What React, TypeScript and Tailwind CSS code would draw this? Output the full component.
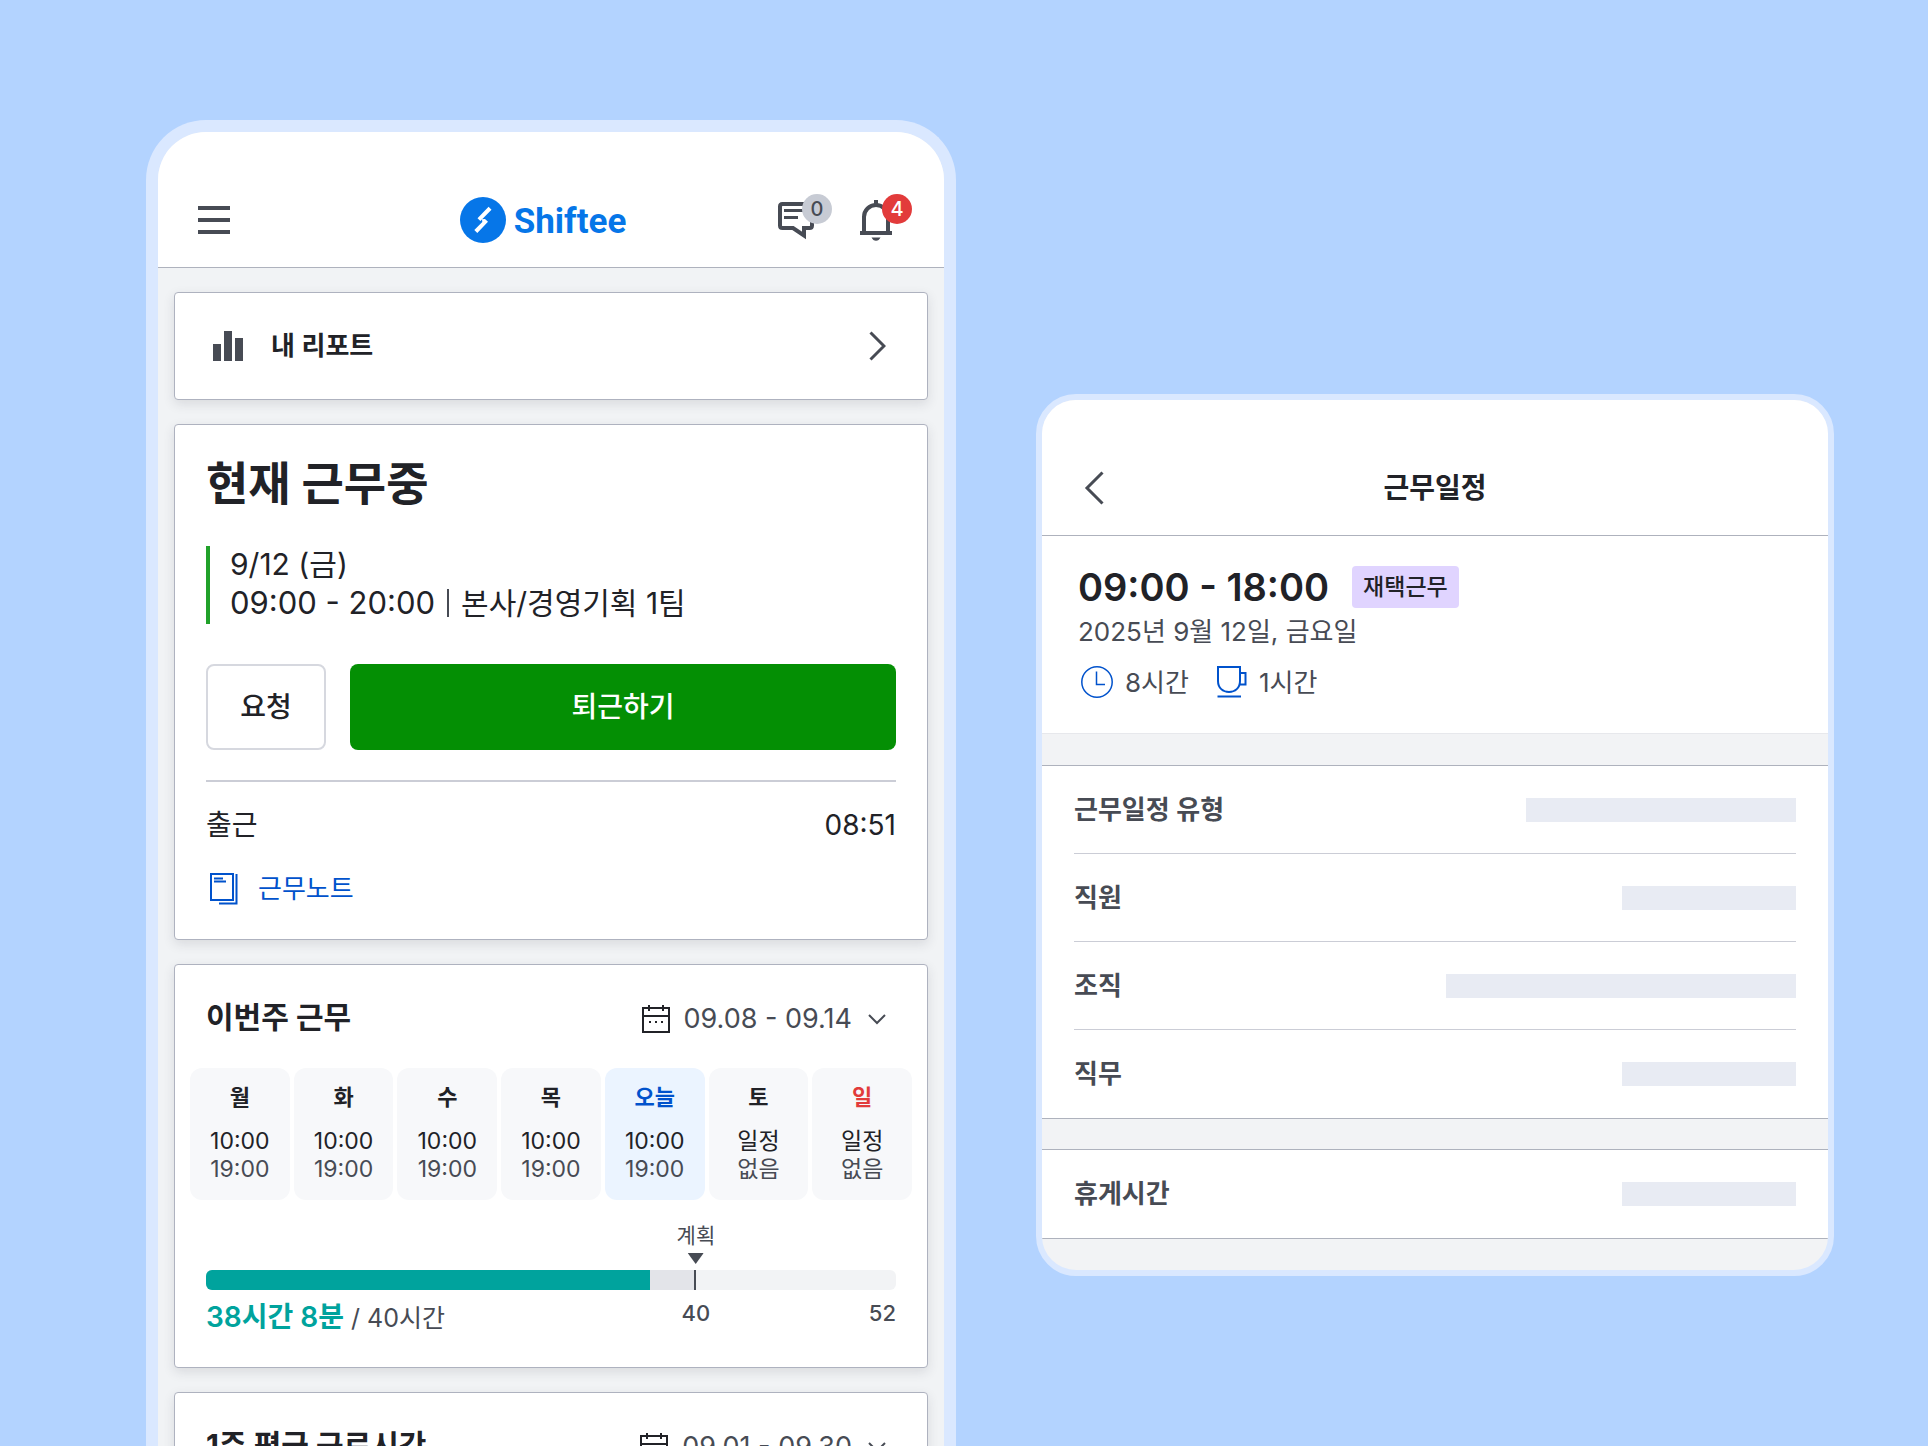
import React from "react";

const FONT = "font-['Inter','Noto_Sans_CJK_KR',sans-serif]";

interface DayPlan {
  label: string;
  from: string;
  to: string;
  tone?: "today" | "holiday";
}

const WEEK: DayPlan[] = [
  { label: "월", from: "10:00", to: "19:00" },
  { label: "화", from: "10:00", to: "19:00" },
  { label: "수", from: "10:00", to: "19:00" },
  { label: "목", from: "10:00", to: "19:00" },
  { label: "오늘", from: "10:00", to: "19:00", tone: "today" },
  { label: "토", from: "일정", to: "없음" },
  { label: "일", from: "일정", to: "없음", tone: "holiday" },
];

const DETAIL_ROWS = [
  { label: "근무일정 유형", bar: "w-[270px]" },
  { label: "직원", bar: "w-[174px]" },
  { label: "조직", bar: "w-[350px]" },
  { label: "직무", bar: "w-[174px]" },
];

// Positions on the weekly bar, in percent of its width.
const WORKED_PCT = 64.4;
const PLANNED_PCT = 71;

export default function App() {
  return (
    <main
      className={`grid h-screen grid-cols-[810fr_798fr] items-start gap-20 overflow-hidden bg-[#b3d3ff] pl-[146px] pr-[94px] text-[#212227] ${FONT}`}
    >
      <HomeScreen />
      <ScheduleScreen />
    </main>
  );
}

function HomeScreen() {
  return (
    <section className="mt-[120px] min-w-0 overflow-hidden rounded-t-[60px] border-x-12 border-t-12 border-[#dae8ff] bg-[#f1f3f5]">
      <header className="grid h-[136px] grid-cols-[1fr_auto_1fr] items-center border-b border-[#aeb2bd] bg-white px-8 pt-[41px]">
        <button type="button" aria-label="메뉴" className="ml-2 justify-self-start">
          <MenuIcon />
        </button>
        <a href="#home" className="mr-4 flex items-center gap-2">
          <LogoMark />
          <span className="pt-[3px] font-['Roboto',sans-serif] text-[35px] leading-10 font-bold text-[#0676e8]">
            Shiftee
          </span>
        </a>
        <div className="mr-5 flex items-center gap-[46px] justify-self-end">
          <button type="button" aria-label="메시지" className="relative">
            <MessageIcon />
            <CountBadge count={0} className="left-6 bg-[#c7cbd4] text-[#474b54]" />
          </button>
          <button type="button" aria-label="알림" className="relative">
            <BellIcon />
            <CountBadge count={4} className="left-[22px] bg-[#e23b3b] text-white" />
          </button>
        </div>
      </header>

      <div className="flex flex-col gap-6 px-4 py-6">
        <Card>
          <a href="#report" className="flex h-[106px] items-center pr-[41px] pl-[38px]">
            <ChartIcon />
            <span className="ml-7 text-[26px] leading-9 font-semibold">내 리포트</span>
            <ChevronRight className="ml-auto" />
          </a>
        </Card>

        <Card>
          <CurrentShift />
        </Card>

        <Card>
          <PeriodHeader title="이번주 근무" range="09.08 - 09.14" />
          <div className="mt-[29px] grid grid-cols-7 gap-1 px-[15px]">
            {WEEK.map((d) => (
              <DayTile key={d.label} day={d} />
            ))}
          </div>
          <WeekProgress />
        </Card>

        <Card>
          <PeriodHeader title="1주 평균 근로시간" range="09.01 - 09.30" />
        </Card>
      </div>
    </section>
  );
}

function Card({ children }: { children: React.ReactNode }) {
  return (
    <div className="rounded-[4px] border border-[#aeb2bf] bg-white shadow-[0_4px_12px_rgba(40,45,60,0.12)]">
      {children}
    </div>
  );
}

function CountBadge({ count, className }: { count: number; className: string }) {
  return (
    <span
      className={`absolute -top-[6px] flex size-[30px] items-center justify-center rounded-full text-xl leading-none font-medium ${className}`}
    >
      {count}
    </span>
  );
}

function CurrentShift() {
  return (
    <div className="px-[31px] pt-7 pb-[30px]">
      <h1 className="text-[46px] leading-[60px] font-bold">현재 근무중</h1>
      <div className="mt-[33px] border-l-4 border-[#21a12a] pl-5 text-[30px]">
        <p className="leading-9">9/12 (금)</p>
        <p className="flex items-center leading-[42px]">
          <time className="text-[31px]">09:00 - 20:00</time>
          <span className="mx-3 h-7 w-[2px] bg-[#474b54]" />
          본사/경영기획 1팀
        </p>
      </div>
      <div className="mt-10 flex h-[86px] gap-6 text-[28px]">
        <button
          type="button"
          className="w-[120px] rounded-[8px] border-2 border-[#d6d8df] font-medium"
        >
          요청
        </button>
        <button
          type="button"
          className="flex-1 rounded-[8px] bg-[#048f04] font-medium text-white"
        >
          퇴근하기
        </button>
      </div>
      <dl className="mt-[30px] flex items-center justify-between border-t-2 border-[#cbcdd6] pt-[23px] text-[28px] leading-10">
        <dt>출근</dt>
        <dd>08:51</dd>
      </dl>
      <a
        href="#note"
        className="mt-6 ml-1 flex items-center gap-5 text-[26px] leading-10 text-[#0052cc]"
      >
        <NoteIcon />
        근무노트
      </a>
    </div>
  );
}

function PeriodHeader({ title, range }: { title: string; range: string }) {
  return (
    <div className="flex h-[74px] items-end justify-between pr-[41px] pl-[31px]">
      <h2 className="text-[30px] leading-[44px] font-bold">{title}</h2>
      <button type="button" className="flex items-center text-[#474b54]">
        <CalendarIcon />
        <span className="mr-4 ml-[14px] text-[27px] leading-[40px]">{range}</span>
        <ChevronDown />
      </button>
    </div>
  );
}

function DayTile({ day }: { day: DayPlan }) {
  const bg = day.tone === "today" ? "bg-[#ebf4ff]" : "bg-[#f7f8fa]";
  const fg =
    day.tone === "today"
      ? "text-[#0052cc]"
      : day.tone === "holiday"
        ? "text-[#e23b3b]"
        : "text-[#212227]";
  return (
    <div className={`flex h-[132px] flex-col items-center rounded-xl pt-[11px] text-[23px] ${bg}`}>
      <span className={`text-[22px] leading-9 font-semibold ${fg}`}>{day.label}</span>
      <span className="mt-3 leading-7">{day.from}</span>
      <span className="leading-7 text-[#474b54]">{day.to}</span>
    </div>
  );
}

function WeekProgress() {
  return (
    <div className="px-[31px] pt-5 pb-[29px] text-[#474b54]">
      <div className="relative h-[50px]">
        <div
          className="absolute top-0 flex -translate-x-1/2 flex-col items-center"
          style={{ left: `${PLANNED_PCT}%` }}
        >
          <span className="text-[21px] leading-8 whitespace-nowrap">계획</span>
          <svg width="16" height="11" viewBox="0 0 16 11" fill="currentColor" className="mt-[1px]">
            <path d="M0 0h16L8 11z" />
          </svg>
        </div>
      </div>
      <div className="relative h-5 overflow-hidden rounded-[6px] bg-[#f2f3f5]">
        <div
          className="absolute inset-y-0 left-0 border-r-2 border-[#474b54] bg-[#e3e4e9]"
          style={{ width: `${PLANNED_PCT}%` }}
        />
        <div
          className="absolute inset-y-0 left-0 bg-[#00a39d]"
          style={{ width: `${WORKED_PCT}%` }}
        />
      </div>
      <div className="relative flex items-start justify-between pt-[7px]">
        <p className="text-[25px] leading-10">
          <strong className="text-[28px] font-semibold text-[#00a39d]">38시간 8분</strong> / 40시간
        </p>
        <span
          className="absolute top-[7px] -translate-x-1/2 text-[22px] leading-8 font-medium"
          style={{ left: `${PLANNED_PCT}%` }}
        >
          40
        </span>
        <span className="text-[22px] leading-8 font-medium">52</span>
      </div>
    </div>
  );
}

function ScheduleScreen() {
  return (
    <section className="mt-[394px] min-w-0 overflow-hidden rounded-[40px] border-6 border-[#dae8ff] bg-[#f2f3f5]">
      <header className="grid h-[136px] grid-cols-[1fr_auto_1fr] items-center border-b border-[#aeb2bd] bg-white px-8 pt-[41px]">
        <button type="button" aria-label="뒤로" className="ml-[10px] justify-self-start">
          <ChevronLeft />
        </button>
        <h2 className="text-[28px] leading-10 font-semibold">근무일정</h2>
      </header>

      <div className="border-b border-[#e7e8ec] bg-white px-9 pt-[30px] pb-[31px]">
        <div className="flex items-center gap-[23px]">
          <time className="text-[38px] leading-[42px] font-semibold">09:00 - 18:00</time>
          <span className="flex h-[42px] items-center rounded-[4px] bg-[#e0d4ff] px-[11px] text-[23px] font-medium">
            재택근무
          </span>
        </div>
        <p className="mt-[6px] text-[26px] leading-9 text-[#474b54]">2025년 9월 12일, 금요일</p>
        <div className="mt-3 ml-[3px] flex h-10 items-center text-[26px] text-[#474b54]">
          <ClockIcon />
          <span className="mr-7 ml-3">8시간</span>
          <CupIcon />
          <span className="ml-3">1시간</span>
        </div>
      </div>

      <dl className="mt-[31px] border-y border-[#aeb2bd] bg-white px-8">
        {DETAIL_ROWS.map((r) => (
          <DetailRow key={r.label} {...r} />
        ))}
      </dl>
      <dl className="mt-[30px] mb-[31px] border-y border-[#aeb2bd] bg-white px-8">
        <DetailRow label="휴게시간" bar="w-[174px]" />
      </dl>
    </section>
  );
}

function DetailRow({ label, bar }: { label: string; bar: string }) {
  return (
    <div className="flex h-[88px] items-center justify-between border-b border-[#cbcdd6] last:border-b-0">
      <dt className="text-[26px] leading-9 font-semibold text-[#474b54]">{label}</dt>
      <dd className={`h-6 bg-[#e8ebf3] ${bar}`} />
    </div>
  );
}

/* ---------- icons ---------- */

function MenuIcon() {
  return (
    <svg width="32" height="28" viewBox="0 0 32 28" fill="#474b54">
      <path d="M0 0h32v4H0zM0 12h32v4H0zM0 24h32v4H0z" />
    </svg>
  );
}

function LogoMark() {
  return (
    <svg width="46" height="46" viewBox="0 0 46 46">
      <circle cx="23" cy="23" r="23" fill="#0676e8" />
      <path
        d="M28.600 9.800l2.900 3L20.400 24l-2.900-2.700zM22 22.200l3-.3 3 2.900-10.700 11.200-3-3 8-8z"
        fill="#fff"
      />
    </svg>
  );
}

function MessageIcon() {
  return (
    <svg width="36" height="41" viewBox="0 -2 36 41" fill="none" stroke="#474b54" strokeWidth="4">
      <path d="M33.500 2H4.500Q2 2 2 4.500V23.500Q2 26 4.500 26H15l11 7.500V26h5.500Q34 26 34 23.500V20" />
      <path d="M6 8.500h22M6 15.500h14" strokeWidth="3" />
    </svg>
  );
}

function BellIcon() {
  return (
    <svg width="32" height="41" viewBox="0 0 32 41" fill="none" stroke="#474b54" strokeWidth="4">
      <path d="M16 0v5M4 32V17a12 12 0 0 1 24 0v15M0 33h32" />
      <path d="M11.500 37.500h9c-1 2-2.500 3.300-4.500 3.300s-3.500-1.300-4.500-3.300z" fill="#474b54" stroke="none" />
    </svg>
  );
}

function ChartIcon() {
  return (
    <svg width="30" height="30" viewBox="0 0 30 30" fill="#474b54">
      <path d="M0 13h8v17H0zM11 0h8v30h-8zM22 7h8v23h-8z" />
    </svg>
  );
}

function ChevronRight({ className }: { className?: string }) {
  return (
    <svg width="17" height="30" viewBox="0 0 17 30" fill="none" stroke="#474b54" strokeWidth="3" className={className}>
      <path d="M1.500 1.500L15 15 1.500 28.500" />
    </svg>
  );
}

function ChevronLeft() {
  return (
    <svg width="20" height="34" viewBox="0 0 20 34" fill="none" stroke="#474b54" strokeWidth="3">
      <path d="M18.500 1.500L3 17l15.500 15.500" />
    </svg>
  );
}

function ChevronDown() {
  return (
    <svg width="18" height="11" viewBox="0 0 18 11" fill="none" stroke="#474b54" strokeWidth="2">
      <path d="M1 1l8 8 8-8" />
    </svg>
  );
}

function CalendarIcon() {
  return (
    <svg width="28" height="28" viewBox="0 0 28 28" fill="none" stroke="#212227" strokeWidth="2">
      <path d="M1 3h26v24H1zM1 11h26M7 0v6M21 0v6" />
      <path d="M7 17h2M13 17h2M19 17h2" />
    </svg>
  );
}

function NoteIcon() {
  return (
    <svg width="28" height="32" viewBox="0 0 28 32" fill="none" stroke="#0052cc" strokeWidth="2">
      <path d="M1 1h22v26H1zM26.500 1v29.500H9" />
      <path d="M4 5.500h9M4 8.500h12" />
    </svg>
  );
}

function ClockIcon() {
  return (
    <svg width="32" height="32" viewBox="0 0 32 32" fill="none" stroke="#0052cc" strokeWidth="1.500">
      <circle cx="16" cy="16" r="15.200" />
      <path d="M15.500 5.500v13h8.500" />
    </svg>
  );
}

function CupIcon() {
  return (
    <svg width="30" height="32" viewBox="0 0 30 32" fill="none" stroke="#0052cc" strokeWidth="2">
      <path d="M1 1h22v14c0 7-5 11-11 11S1 22 1 15zM23 7h5.500v11.500H22M.500 30.500H24" />
    </svg>
  );
}
